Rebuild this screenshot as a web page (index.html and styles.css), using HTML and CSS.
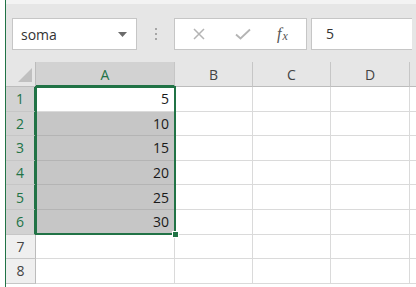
FILE: index.html
```html
<!DOCTYPE html>
<html>
<head>
<meta charset="utf-8">
<link rel="stylesheet" href="styles.css">
</head>
<body>
<div class="app">
  <div class="edge"></div>
  <div class="main">
    <div class="toolbar">
      <div class="namebox">
        <span class="name">soma</span>
        <svg class="caret" width="9" height="5" viewBox="0 0 9 5"><path d="M0 0H9L4.5 5Z" fill="#6b6b6b"/></svg>
      </div>
      <div class="dots"><i></i><i></i><i></i></div>
      <div class="fbtns">
        <svg class="x" width="12" height="12" viewBox="0 0 12 12"><path d="M1 1L11 11M11 1L1 11" stroke="#b4b4b4" stroke-width="1.5" fill="none"/></svg>
        <svg class="check" width="16" height="12" viewBox="0 0 16 12"><path d="M1 6.5L5.5 10.5L15 1.5" stroke="#b4b4b4" stroke-width="1.8" fill="none"/></svg>
        <span class="fx"><i>f</i><span class="fxx">x</span></span>
      </div>
      <div class="formula">5</div>
    </div>
    <div class="sheet">
      <div class="corner"><svg width="14" height="14" viewBox="0 0 14 14"><path d="M14 0V14H0Z" fill="#c0c0c0"/></svg></div>
      <div class="ch sel">A</div>
      <div class="ch">B</div>
      <div class="ch">C</div>
      <div class="ch last">D</div>
      <div class="ch rest"></div>

      <div class="rh sel">1</div><div class="c num">5</div><div class="c"></div><div class="c"></div><div class="c last"></div><div class="c rest"></div>
      <div class="rh sel">2</div><div class="c num g">10</div><div class="c"></div><div class="c"></div><div class="c last"></div><div class="c rest"></div>
      <div class="rh sel">3</div><div class="c num g">15</div><div class="c"></div><div class="c"></div><div class="c last"></div><div class="c rest"></div>
      <div class="rh sel">4</div><div class="c num g">20</div><div class="c"></div><div class="c"></div><div class="c last"></div><div class="c rest"></div>
      <div class="rh sel">5</div><div class="c num g">25</div><div class="c"></div><div class="c"></div><div class="c last"></div><div class="c rest"></div>
      <div class="rh sel">6</div><div class="c num g">30</div><div class="c"></div><div class="c"></div><div class="c last"></div><div class="c rest"></div>
      <div class="rh">7</div><div class="c"></div><div class="c"></div><div class="c"></div><div class="c last"></div><div class="c rest"></div>
      <div class="rh">8</div><div class="c"></div><div class="c"></div><div class="c"></div><div class="c last"></div><div class="c rest"></div>

      <div class="selection"><span class="handle"></span></div>
    </div>
  </div>
</div>
</body>
</html>
```
FILE: styles.css
```css
* { box-sizing: border-box; }
html, body { margin: 0; padding: 0; }
body {
  width: 416px;
  height: 287px;
  overflow: hidden;
  background: #ffffff;
  font-family: "Open Sans", "Noto Sans", sans-serif;
  color: #222;
}
.app {
  display: flex;
  height: 287px;
}
.edge {
  width: 6px;
  flex: none;
  border-right: 1px solid #217346;
  background: #fff;
}
.main {
  flex: 1;
  display: flex;
  flex-direction: column;
}
.toolbar {
  height: 62px;
  background: #e6e6e6;
  border-top: 4px solid #f3f3f3;
  display: flex;
  align-items: flex-start;
  padding: 14px 0 0 6px;
}
.namebox {
  width: 125px;
  height: 32px;
  background: #fff;
  border: 1px solid #c6c6c6;
  display: flex;
  align-items: center;
  justify-content: space-between;
  padding: 0 9px 0 8px;
}
.name { font-size: 14px; color: #333; }
.dots {
  width: 37px;
  height: 32px;
  display: flex;
  flex-direction: column;
  align-items: center;
  justify-content: center;
  gap: 3px;
}
.dots i {
  display: block;
  width: 2px;
  height: 2px;
  background: #a6a6a6;
}
.fbtns {
  width: 133px;
  height: 32px;
  background: #fff;
  border: 1px solid #c6c6c6;
  display: flex;
  align-items: center;
  padding-left: 18px;
}
.fbtns .x { margin-right: 30px; }
.fbtns .check { margin-right: 26px; }
.fx {
  font-family: "Liberation Serif", serif;
  font-size: 16px;
  color: #555;
  font-style: italic;
  display: flex;
  align-items: baseline;
}
.fx .fxx { font-size: 12px; position: relative; top: 1px; margin-left: 1px; }
.formula {
  width: 101px;
  height: 32px;
  margin-left: 4px;
  background: #fff;
  border: 1px solid #c6c6c6;
  border-right: none;
  font-size: 14px;
  line-height: 30px;
  padding-left: 14px;
  color: #333;
}
.sheet {
  position: relative;
  display: grid;
  grid-template-columns: 30px 139px 78px 78px 79px 1fr;
  grid-template-rows: 25px repeat(8, 24.6px);
}
.corner {
  background: #e6e6e6;
  border-right: 1px solid #bcbcbc;
  border-bottom: 1px solid #bcbcbc;
  display: flex;
  align-items: flex-end;
  justify-content: flex-end;
  padding: 0 3px 4px 0;
}
.ch {
  background: #e6e6e6;
  border-right: 1px solid #c6c6c6;
  border-bottom: 1px solid #bcbcbc;
  font-size: 14px;
  color: #444;
  display: flex;
  align-items: center;
  justify-content: center;
  padding-top: 1px;
}
.ch.sel {
  background: #d2d2d2;
  color: #217346;
  border-bottom: 2px solid #217346;
}
.ch.rest { border-right: none; background: #e6e6e6; }
.rh {
  background: #efefef;
  border-right: 1px solid #bcbcbc;
  border-bottom: 1px solid #c6c6c6;
  font-size: 14px;
  color: #444;
  display: flex;
  align-items: center;
  justify-content: center;
}
.rh.sel {
  background: #d2d2d2;
  color: #217346;
  border-right: 2px solid #217346;
}
.c {
  background: #fff;
  border-right: 1px solid #dadada;
  border-bottom: 1px solid #dadada;
  font-size: 14px;
  color: #1a1a1a;
}
.c.rest { border-right: none; }
.c.num {
  display: flex;
  align-items: center;
  justify-content: flex-end;
  padding-right: 5px;
}
.c.g { background: #c6c6c6; border-bottom-color: #b4b4b4; }
.selection {
  position: absolute;
  left: 29px;
  top: 24px;
  width: 141px;
  height: 149px;
  border: 2px solid #217346;
  pointer-events: none;
}
.handle {
  position: absolute;
  right: -5px;
  bottom: -5px;
  width: 7px;
  height: 7px;
  background: #217346;
  border: 1px solid #fff;
}
```
